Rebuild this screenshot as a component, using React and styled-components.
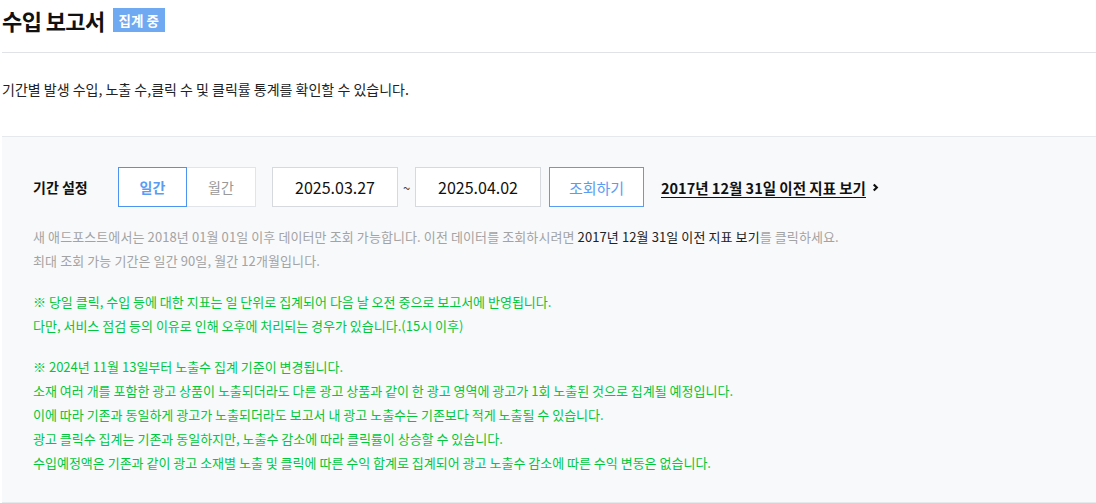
import React from "react";
import styled, { createGlobalStyle } from "styled-components";

const GlobalStyle = createGlobalStyle`
  body {
    margin: 0;
    background: #fff;
    font-family: "Noto Sans CJK KR", "Noto Sans", sans-serif;
    color: #111;
  }
`;

const notices = [
  [
    "※ 당일 클릭, 수입 등에 대한 지표는 일 단위로 집계되어 다음 날 오전 중으로 보고서에 반영됩니다.",
    "다만, 서비스 점검 등의 이유로 인해 오후에 처리되는 경우가 있습니다.(15시 이후)",
  ],
  [
    "※ 2024년 11월 13일부터 노출수 집계 기준이 변경됩니다.",
    "소재 여러 개를 포함한 광고 상품이 노출되더라도 다른 광고 상품과 같이 한 광고 영역에 광고가 1회 노출된 것으로 집계될 예정입니다.",
    "이에 따라 기존과 동일하게 광고가 노출되더라도 보고서 내 광고 노출수는 기존보다 적게 노출될 수 있습니다.",
    "광고 클릭수 집계는 기존과 동일하지만, 노출수 감소에 따라 클릭률이 상승할 수 있습니다.",
    "수입예정액은 기존과 같이 광고 소재별 노출 및 클릭에 따른 수익 합계로 집계되어 광고 노출수 감소에 따른 수익 변동은 없습니다.",
  ],
];

const App = () => {
  return (
    <Page>
      <GlobalStyle />
      <Header>
        <Title>수입 보고서</Title>
        <Badge>집계 중</Badge>
      </Header>
      <Intro>기간별 발생 수입, 노출 수,클릭 수 및 클릭률 통계를 확인할 수 있습니다.</Intro>
      <FilterBox>
        <Controls>
          <Label>기간 설정</Label>
          <Toggle>
            <ToggleButton $active>일간</ToggleButton>
            <ToggleButton>월간</ToggleButton>
          </Toggle>
          <DateRange>
            <DateInput>2025.03.27</DateInput>
            <Tilde>~</Tilde>
            <DateInput>2025.04.02</DateInput>
          </DateRange>
          <SearchButton>조회하기</SearchButton>
          <OldLink>
            <span>2017년 12월 31일 이전 지표 보기</span>
            <Chevron viewBox="0 0 8 10">
              <path d="M2 1.5 L5.5 5 L2 8.5" fill="none" stroke="#111" strokeWidth="2.5" />
            </Chevron>
          </OldLink>
        </Controls>
        <Paragraph>
          <Line $muted>
            새 애드포스트에서는 2018년 01월 01일 이후 데이터만 조회 가능합니다. 이전 데이터를 조회하시려면{" "}
            <Strong>2017년 12월 31일 이전 지표 보기</Strong>를 클릭하세요.
          </Line>
          <Line $muted>최대 조회 가능 기간은 일간 90일, 월간 12개월입니다.</Line>
        </Paragraph>
        {notices.map((block, i) => (
          <Paragraph key={i}>
            {block.map((text) => (
              <Line key={text} $green>{text}</Line>
            ))}
          </Paragraph>
        ))}
      </FilterBox>
    </Page>
  );
};

const Page = styled.div`
  margin-left: 2px;
`;

const Header = styled.div`
  height: 53px;
  display: flex;
  align-items: center;
  gap: 8px;
  border-bottom: 1px solid #dfe3e8;
  box-sizing: border-box;
  padding-bottom: 12px;
`;

const Title = styled.h1`
  margin: 0;
  font-size: 22px;
  font-weight: 700;
  letter-spacing: -0.6px;
  color: #111;
`;

const Badge = styled.span`
  display: inline-flex;
  align-items: center;
  height: 24px;
  padding: 0 6px;
  background: #6ea9f2;
  color: #fff;
  font-size: 13.5px;
  font-weight: 700;
`;

const Intro = styled.p`
  margin: 0;
  padding: 26px 0 37px;
  font-size: 14px;
  line-height: 20px;
  color: #222;
`;

const FilterBox = styled.div`
  background: #f8f9fb;
  border-top: 1px solid #e6e9ec;
  border-bottom: 1px solid #e6e9ec;
  padding: 30px 31px 27px;
`;

const Controls = styled.div`
  display: flex;
  align-items: center;
  height: 40px;
  margin-bottom: 18px;
`;

const Label = styled.span`
  width: 85px;
  font-size: 14px;
  font-weight: 700;
  color: #111;
`;

const Toggle = styled.div`
  display: flex;
  margin-right: 16px;
`;

const ToggleButton = styled.div`
  width: 69px;
  height: 40px;
  box-sizing: border-box;
  display: flex;
  align-items: center;
  justify-content: center;
  background: #fff;
  font-size: 14px;
  font-weight: ${(p) => (p.$active ? 700 : 400)};
  color: ${(p) => (p.$active ? "#5b9cf3" : "#999")};
  border: 1px solid ${(p) => (p.$active ? "#4d94f2" : "#e1e4e8")};
  & + & {
    border-left: none;
  }
`;

const DateRange = styled.div`
  display: flex;
  align-items: center;
  margin-right: 8px;
`;

const DateInput = styled.div`
  width: 126px;
  height: 40px;
  box-sizing: border-box;
  display: flex;
  align-items: center;
  justify-content: center;
  background: #fff;
  border: 1px solid #d6dade;
  font-size: 16px;
  color: #111;
`;

const Tilde = styled.span`
  width: 17px;
  text-align: center;
  font-size: 13px;
  color: #444;
`;

const SearchButton = styled.div`
  width: 95px;
  height: 40px;
  box-sizing: border-box;
  display: flex;
  align-items: center;
  justify-content: center;
  background: #fff;
  border: 1px solid #5b9cf3;
  color: #5b9cf3;
  font-size: 15px;
  margin-right: 17px;
`;

const OldLink = styled.a`
  display: flex;
  align-items: center;
  gap: 6px;
  font-size: 14.5px;
  font-weight: 700;
  color: #111;
  span {
    text-decoration: underline;
    text-underline-offset: 3px;
  }
`;

const Chevron = styled.svg`
  width: 7px;
  height: 9px;
`;

const Paragraph = styled.div`
  & + & {
    margin-top: 17px;
  }
`;

const Line = styled.p`
  margin: 0;
  font-size: 13px;
  line-height: 24px;
  letter-spacing: ${(p) => (p.$muted ? "0.1px" : "0")};
  color: ${(p) => (p.$green ? "#00c73c" : p.$muted ? "#a3a3a3" : "#333")};
`;

const Strong = styled.span`
  color: #222;
`;

export default App;
